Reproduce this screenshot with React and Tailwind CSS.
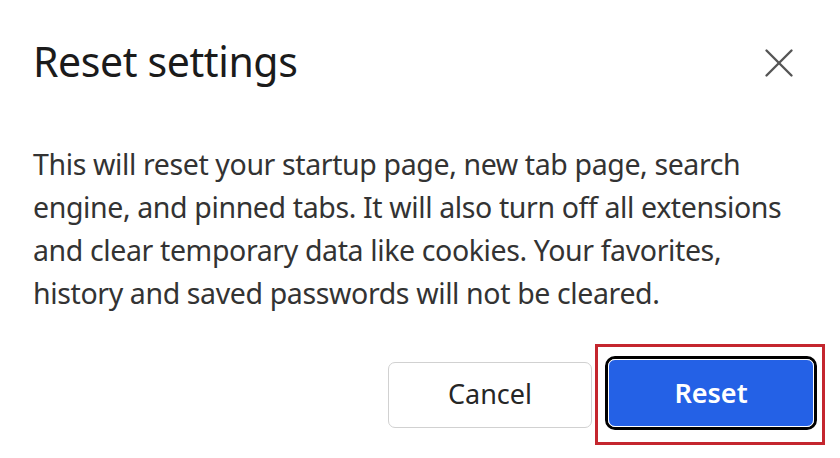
import { X } from "lucide-react";

const lines = [
  "This will reset your startup page, new tab page, search",
  "engine, and pinned tabs. It will also turn off all extensions",
  "and clear temporary data like cookies. Your favorites,",
  "history and saved passwords will not be cleared.",
];

const ResetDialog = () => {
  return (
    <div className="w-[840px] h-[458px] bg-white overflow-hidden" style={{ fontFamily: '"Noto Sans", "Open Sans", sans-serif' }}>
      <div className="flex items-start justify-between pl-[33px] pr-[36px] pt-[33px]">
        <h1 className="text-[41px] leading-[56px] text-[#1b1b1b] tracking-[-0.4px]">Reset settings</h1>
        <button className="mt-[5px] text-[#555]">
          <X size={50} strokeWidth={1.15} />
        </button>
      </div>
      <p className="pl-[33px] mt-[54px] text-[28.5px] leading-[43px] text-[#333] tracking-[-0.38px]">
        {lines.map((l, i) => (
          <span key={i} className="block whitespace-nowrap">{l}</span>
        ))}
      </p>
      <div className="flex justify-end items-center gap-[3px] pr-[15px] mt-[29px]">
        <button className="w-[204px] h-[66px] rounded-[7px] border border-[#d1d1d1] bg-white text-[27px] text-[#262626]">
          Cancel
        </button>
        <div className="border-[3px] border-[#c4262e] pt-[9px] pb-[12px] pl-[7px] pr-[5px]">
          <div className="rounded-[10px] border-[3px] border-black">
            <button className="block w-[206px] h-[68px] rounded-[7px] border border-white bg-[#2461e6] text-[27px] font-semibold text-white">
              Reset
            </button>
          </div>
        </div>
      </div>
    </div>
  );
};

export default function App() {
  return <ResetDialog />;
}
